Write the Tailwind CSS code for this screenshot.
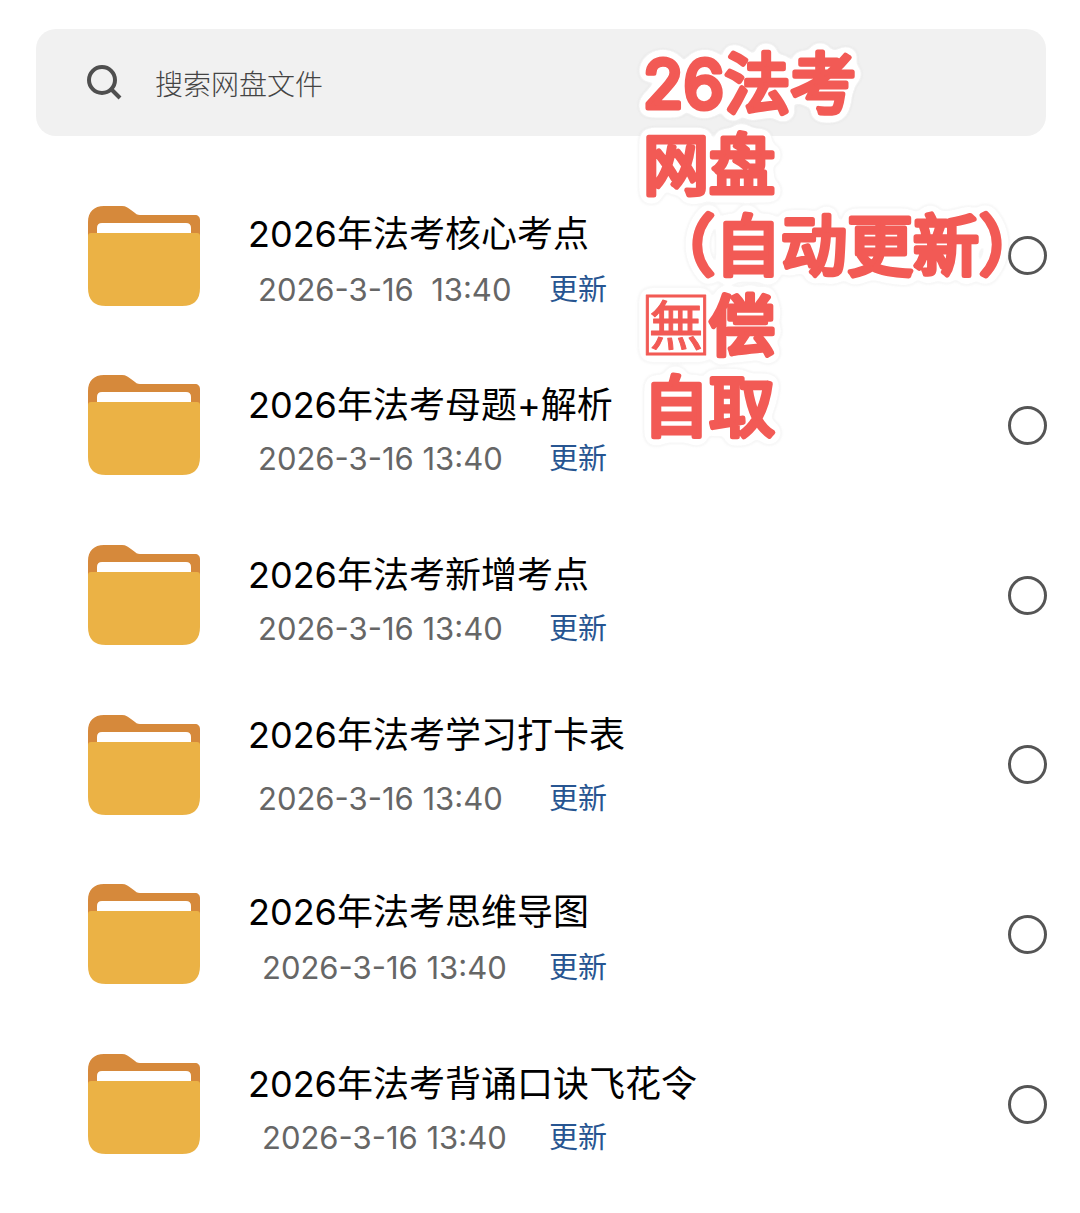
<!DOCTYPE html>
<html lang="zh-CN">
<head>
    <meta charset="utf-8">
    <meta name="viewport" content="width=device-width, initial-scale=1">
    <title>网盘文件</title>
    <script src="https://cdn.jsdelivr.net/npm/@tailwindcss/browser@4"></script>
</head>
<body class="bg-white font-['Inter','Noto_Sans_CJK_SC',sans-serif]">

<svg class="absolute size-0" aria-hidden="true">
    <symbol id="folder" viewBox="0 0 112 100">
        <path fill="#d6893b" d="M0 40V16C0 6 6 0 16 0H34C38 0 40 2 43 4L47 7C49 9 51 9 54 9H107C110 9 112 11 112 14V40Z"/>
        <path fill="#fff" d="M9 30V22Q9 17 14 17H98Q103 17 103 22V30Z"/>
        <path fill="#ebb245" d="M0 30Q0 27 3 27H109Q112 27 112 30V82Q112 100 94 100H18Q0 100 0 82Z"/>
    </symbol>
    <!-- white sticker border: spread the letters, then harden the edge -->
    <filter id="sticker" x="-10%" y="-10%" width="120%" height="120%" color-interpolation-filters="sRGB">
        <feGaussianBlur in="SourceAlpha" stdDeviation="5"/>
        <feComponentTransfer result="spread"><feFuncA type="linear" slope="20" intercept="-0.5"/></feComponentTransfer>
        <feFlood flood-color="#fff"/>
        <feComposite in2="spread" operator="in" result="border"/>
        <feDropShadow in="border" dx="0" dy="0" stdDeviation="1" flood-color="#777" flood-opacity="0.2"/>
        <feMerge><feMergeNode/><feMergeNode in="SourceGraphic"/></feMerge>
    </filter>
</svg>

<main class="relative min-h-screen flex flex-col pt-[29px] pb-6">

    <form class="ml-9 mr-[34px] h-[107px] shrink-0 flex items-center rounded-[20px] bg-[#f1f1f1] pl-[50px] pr-6" role="search">
        <svg class="size-9 shrink-0" viewBox="0 0 36 36" fill="none" stroke="#4f4f4f" stroke-width="4">
            <circle cx="16" cy="15" r="13"/>
            <path d="M25 24L34 33"/>
        </svg>
        <input class="ml-[33px] pt-1 flex-1 min-w-0 bg-transparent text-[28px] leading-10 text-[#444] placeholder:text-[#444] outline-none font-light"
               type="search" aria-label="搜索网盘文件" placeholder="搜索网盘文件">
    </form>

    <ul class="mt-[35px] pl-[88px] pr-[33px] flex-1 grid auto-rows-fr">
        <li class="flex items-center">
            <svg class="w-28 h-[100px] shrink-0"><use href="#folder"/></svg>
            <div class="ml-12 flex-1 h-[108px] flex flex-col justify-end gap-4">
                <label for="f1" class="text-[36px] leading-10 text-black">2026年法考核心考点</label>
                <div class="flex text-[29px] leading-10">
                    <time class="w-[301px] pl-2.5 text-[31px] text-[#666]">2026-3-16&nbsp; 13:40</time>
                    <a href="#f1" class="text-[#275591]">更新</a>
                </div>
            </div>
            <input id="f1" type="checkbox" class="appearance-none size-[39px] rounded-full border-3 border-[#555] checked:bg-[#555]">
        </li>
        <li class="flex items-center">
            <svg class="w-28 h-[100px] shrink-0"><use href="#folder"/></svg>
            <div class="ml-12 flex-1 h-[108px] flex flex-col justify-end gap-3.5">
                <label for="f2" class="text-[36px] leading-10 text-black">2026年法考母题+解析</label>
                <div class="flex text-[29px] leading-10">
                    <time class="w-[301px] pl-2.5 text-[31px] text-[#666]">2026-3-16 13:40</time>
                    <a href="#f2" class="text-[#275591]">更新</a>
                </div>
            </div>
            <input id="f2" type="checkbox" class="appearance-none size-[39px] rounded-full border-3 border-[#555] checked:bg-[#555]">
        </li>
        <li class="flex items-center">
            <svg class="w-28 h-[100px] shrink-0"><use href="#folder"/></svg>
            <div class="ml-12 flex-1 h-[108px] flex flex-col justify-end gap-3.5">
                <label for="f3" class="text-[36px] leading-10 text-black">2026年法考新增考点</label>
                <div class="flex text-[29px] leading-10">
                    <time class="w-[301px] pl-2.5 text-[31px] text-[#666]">2026-3-16 13:40</time>
                    <a href="#f3" class="text-[#275591]">更新</a>
                </div>
            </div>
            <input id="f3" type="checkbox" class="appearance-none size-[39px] rounded-full border-3 border-[#555] checked:bg-[#555]">
        </li>
        <li class="flex items-center">
            <svg class="w-28 h-[100px] shrink-0"><use href="#folder"/></svg>
            <div class="ml-12 flex-1 h-[108px] flex flex-col justify-end gap-6">
                <label for="f4" class="text-[36px] leading-10 text-black">2026年法考学习打卡表</label>
                <div class="flex text-[29px] leading-10">
                    <time class="w-[301px] pl-2.5 text-[31px] text-[#666]">2026-3-16 13:40</time>
                    <a href="#f4" class="text-[#275591]">更新</a>
                </div>
            </div>
            <input id="f4" type="checkbox" class="appearance-none size-[39px] rounded-full border-3 border-[#555] checked:bg-[#555]">
        </li>
        <li class="flex items-center">
            <svg class="w-28 h-[100px] shrink-0"><use href="#folder"/></svg>
            <div class="ml-12 flex-1 h-[108px] flex flex-col justify-end gap-4">
                <label for="f5" class="text-[36px] leading-10 text-black">2026年法考思维导图</label>
                <div class="flex text-[29px] leading-10">
                    <time class="w-[301px] pl-3.5 text-[31px] text-[#666]">2026-3-16 13:40</time>
                    <a href="#f5" class="text-[#275591]">更新</a>
                </div>
            </div>
            <input id="f5" type="checkbox" class="appearance-none size-[39px] rounded-full border-3 border-[#555] checked:bg-[#555]">
        </li>
        <li class="flex items-center">
            <svg class="w-28 h-[100px] shrink-0"><use href="#folder"/></svg>
            <div class="ml-12 flex-1 h-[108px] flex flex-col justify-end gap-3.5">
                <label for="f6" class="text-[36px] leading-10 text-black">2026年法考背诵口诀飞花令</label>
                <div class="flex text-[29px] leading-10">
                    <time class="w-[301px] pl-3.5 text-[31px] text-[#666]">2026-3-16 13:40</time>
                    <a href="#f6" class="text-[#275591]">更新</a>
                </div>
            </div>
            <input id="f6" type="checkbox" class="appearance-none size-[39px] rounded-full border-3 border-[#555] checked:bg-[#555]">
        </li>
    </ul>

    <!-- sticker caption over the list -->
    <svg class="absolute left-[643px] top-10 w-[400px] h-[420px] overflow-visible pointer-events-none font-['Noto_Sans_CJK_SC',sans-serif] text-[66px]"
         fill="#f25a55" stroke="#f25a55" stroke-width="5" stroke-linejoin="round" filter="url(#sticker)">
        <text x="0" y="68"><tspan class="font-['Inter']">26</tspan>法考</text>
        <text x="0" y="149">网盘</text>
        <text x="6" y="230">（自动更新）</text>
        <text x="0" y="310"><tspan stroke-width="1">🈚&#xFE0E;</tspan>偿</text>
        <text x="0" y="391">自取</text>
    </svg>
</main>

</body>
</html>
